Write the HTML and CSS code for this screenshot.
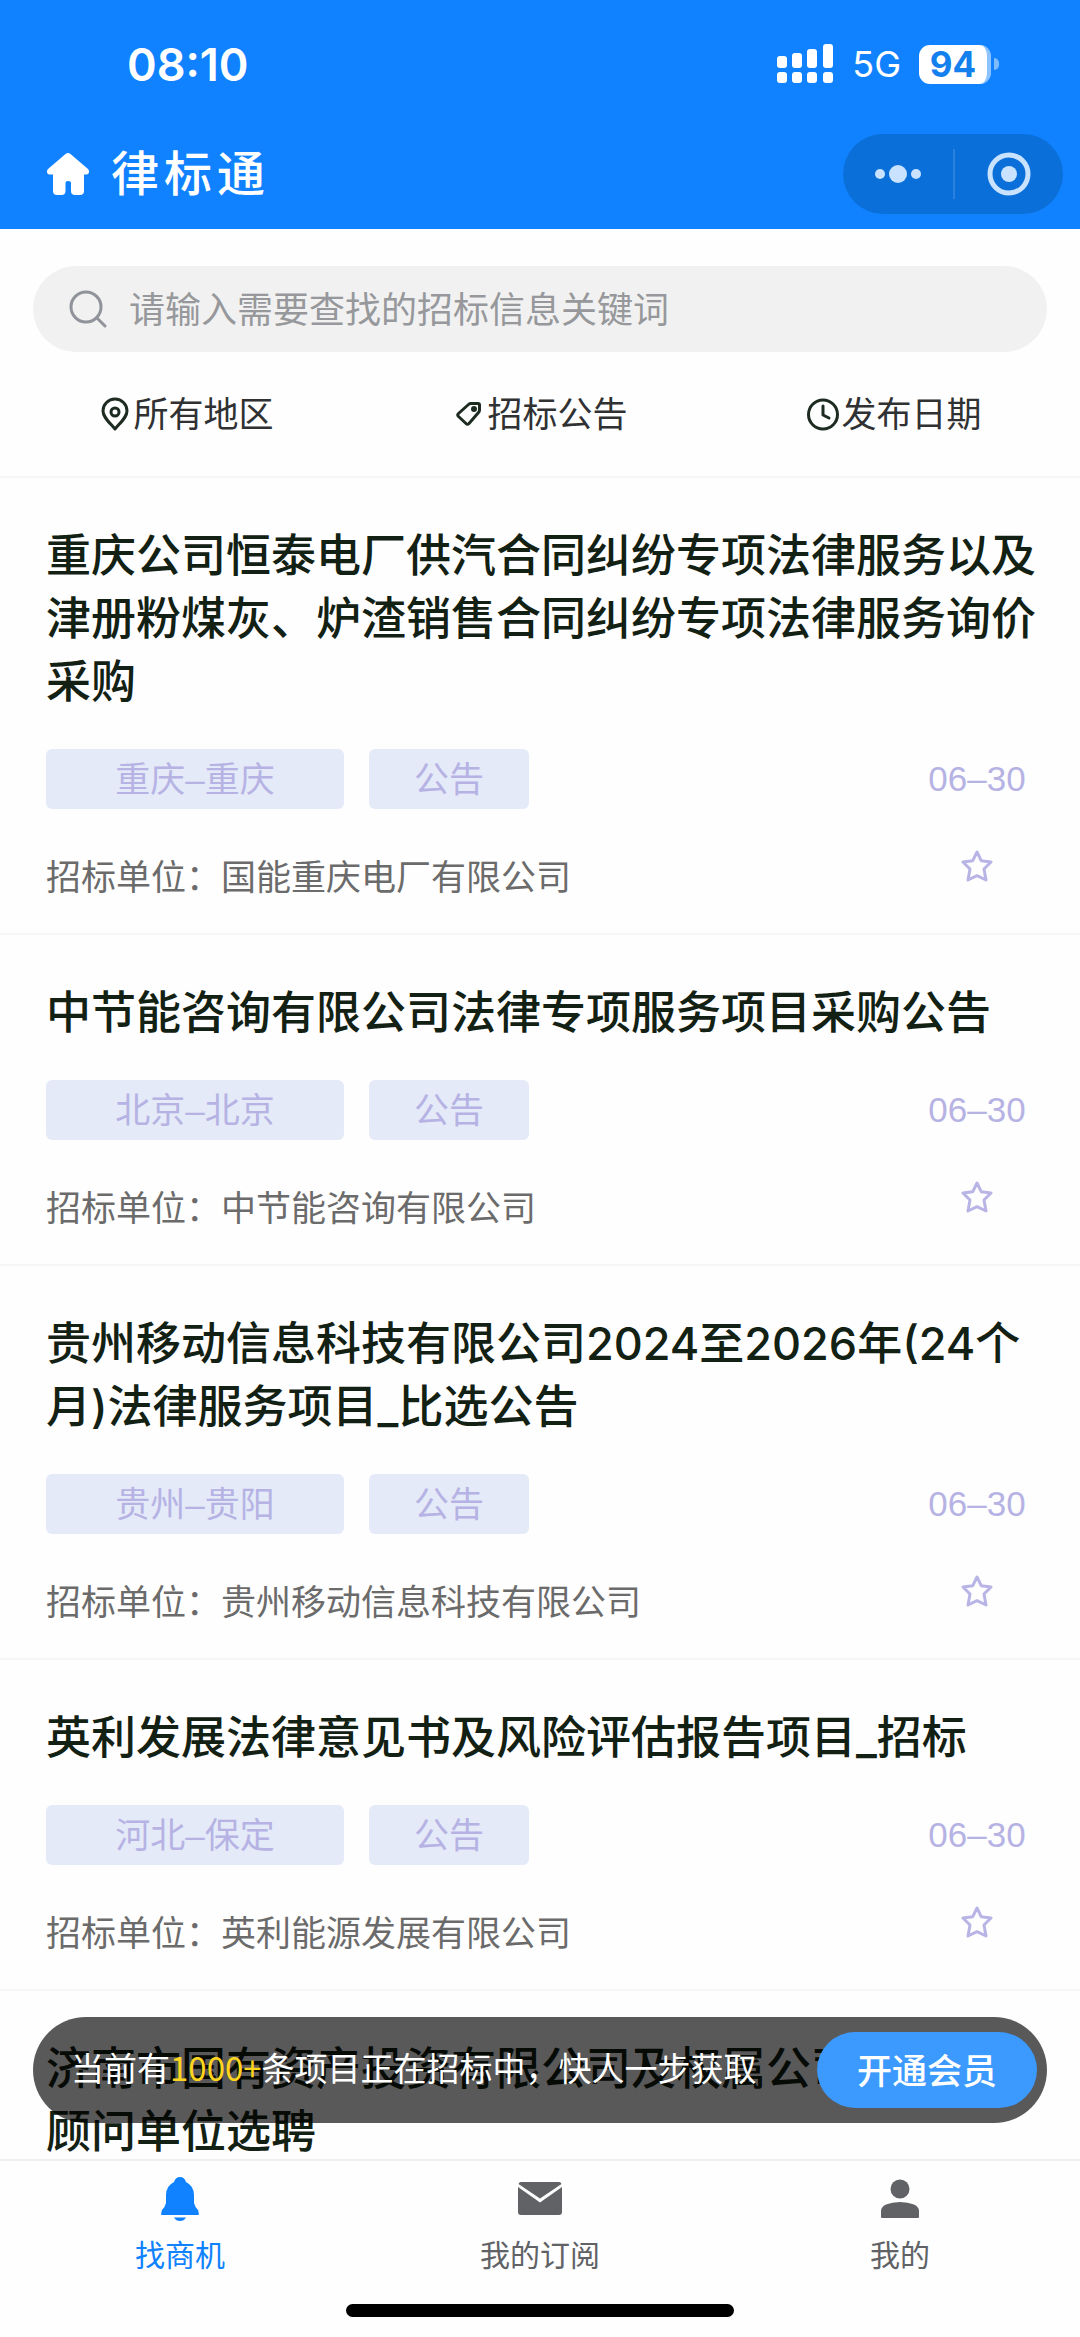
FILE: index.html
```html
<!DOCTYPE html>
<html lang="zh-CN">
<head>
<meta charset="utf-8">
<meta name="viewport" content="width=device-width, initial-scale=1">
<title>律标通</title>
<link rel="stylesheet" href="styles.css">
</head>
<body>
<div class="app">
  <header class="header">
    <div class="status">
      <span class="status-time">08:10</span>
      <div class="status-right">
        <svg class="signal" viewBox="0 0 56 40" aria-hidden="true">
          <rect x="0" y="12" width="10" height="12" rx="3"/><rect x="15" y="9" width="10" height="15" rx="3"/><rect x="30" y="5" width="10" height="19" rx="3"/><rect x="46" y="0" width="10" height="24" rx="3"/>
          <rect x="0" y="28" width="10" height="11" rx="3"/><rect x="15" y="28" width="10" height="11" rx="3"/><rect x="30" y="28" width="10" height="11" rx="3"/><rect x="46" y="28" width="10" height="11" rx="3"/>
        </svg>
        <span class="network">5G</span>
        <div class="battery"><span class="battery-level">94</span><span class="battery-nub"></span></div>
      </div>
    </div>
    <div class="navbar">
      <a class="home" href="#" aria-label="首页">
        <svg viewBox="0 0 42 42" aria-hidden="true"><path d="M18.500 1Q21-1 23.500 1L41 16Q42.500 18 41.800 20Q41 21.500 39 21.500H37V38Q37 42 33 42H28Q24 42 24 38V30Q24 28 21 28Q18.500 28 18.500 30V38Q18.500 42 14.500 42H10Q6 42 6 38V21.500H3Q1 21.500 .2 20Q-.5 18 1 16Z"/></svg>
      </a>
      <h1 class="brand">律标通</h1>
      <div class="capsule">
        <button class="capsule-btn" type="button" aria-label="更多">
          <svg viewBox="0 0 48 18" width="48" height="18" aria-hidden="true"><circle cx="6" cy="9" r="5"/><circle cx="24" cy="9" r="9"/><circle cx="42" cy="9" r="5"/></svg>
        </button>
        <button class="capsule-btn" type="button" aria-label="关闭">
          <svg viewBox="0 0 44 44" width="44" height="44" aria-hidden="true"><circle class="ring" cx="22" cy="22" r="19"/><circle cx="22" cy="22" r="8"/></svg>
        </button>
      </div>
    </div>
  </header>

  <div class="tools">
    <label class="search">
      <svg viewBox="0 0 38 38" aria-hidden="true"><circle cx="17" cy="17" r="15"/><path d="M28 28L36 36"/></svg>
      <input type="search" placeholder="请输入需要查找的招标信息关键词" aria-label="搜索">
    </label>
    <div class="filters">
      <button class="filter" type="button">
        <svg viewBox="0 0 35 35" aria-hidden="true"><path d="M17 32C11 25 5 20 5 14A12 12 0 0 1 29 14C29 20 23 25 17 32Z"/><circle cx="17" cy="15" r="4"/></svg>
        <span>所有地区</span>
      </button>
      <button class="filter" type="button">
        <svg viewBox="0 0 35 35" aria-hidden="true"><path d="M16.500 7.500Q17.500 6.500 19 6.500H26Q27.500 6.500 27.500 8V13Q27.500 14.500 26.500 15.500L17 26.500Q15.500 28 14 26.500L6.500 19.500Q5 18 6.500 16.500Z"/><circle cx="22" cy="12" r="1.500"/></svg>
        <span>招标公告</span>
      </button>
      <button class="filter" type="button">
        <svg viewBox="0 0 35 35" aria-hidden="true"><circle cx="17" cy="17.500" r="14.500"/><path d="M17 9V18L23 21"/></svg>
        <span>发布日期</span>
      </button>
    </div>
  </div>

  <main class="list">
    <article class="item">
      <h2 class="item-title">重庆公司恒泰电厂供汽合同纠纷专项法律服务以及津册粉煤灰、炉渣销售合同纠纷专项法律服务询价采购</h2>
      <div class="item-meta"><span class="tag tag-area">重庆–重庆</span><span class="tag tag-kind">公告</span><time class="side">06–30</time></div>
      <div class="item-foot"><p class="unit">招标单位：国能重庆电厂有限公司</p><button class="side star" type="button" aria-label="收藏"><svg viewBox="0 0 32 32" aria-hidden="true"><path d="M16 2L20.200 10.700L30 12L23 19L25 30L16 25.700L7 30L9 19L2 12L11.800 10.700Z"/></svg></button></div>
    </article>
    <article class="item">
      <h2 class="item-title">中节能咨询有限公司法律专项服务项目采购公告</h2>
      <div class="item-meta"><span class="tag tag-area">北京–北京</span><span class="tag tag-kind">公告</span><time class="side">06–30</time></div>
      <div class="item-foot"><p class="unit">招标单位：中节能咨询有限公司</p><button class="side star" type="button" aria-label="收藏"><svg viewBox="0 0 32 32" aria-hidden="true"><path d="M16 2L20.200 10.700L30 12L23 19L25 30L16 25.700L7 30L9 19L2 12L11.800 10.700Z"/></svg></button></div>
    </article>
    <article class="item">
      <h2 class="item-title">贵州移动信息科技有限公司2024至2026年(24个月)法律服务项目_比选公告</h2>
      <div class="item-meta"><span class="tag tag-area">贵州–贵阳</span><span class="tag tag-kind">公告</span><time class="side">06–30</time></div>
      <div class="item-foot"><p class="unit">招标单位：贵州移动信息科技有限公司</p><button class="side star" type="button" aria-label="收藏"><svg viewBox="0 0 32 32" aria-hidden="true"><path d="M16 2L20.200 10.700L30 12L23 19L25 30L16 25.700L7 30L9 19L2 12L11.800 10.700Z"/></svg></button></div>
    </article>
    <article class="item">
      <h2 class="item-title">英利发展法律意见书及风险评估报告项目_招标</h2>
      <div class="item-meta"><span class="tag tag-area">河北–保定</span><span class="tag tag-kind">公告</span><time class="side">06–30</time></div>
      <div class="item-foot"><p class="unit">招标单位：英利能源发展有限公司</p><button class="side star" type="button" aria-label="收藏"><svg viewBox="0 0 32 32" aria-hidden="true"><path d="M16 2L20.200 10.700L30 12L23 19L25 30L16 25.700L7 30L9 19L2 12L11.800 10.700Z"/></svg></button></div>
    </article>
    <article class="item">
      <h2 class="item-title">济南市国有资产投资有限公司及权属公司常年法律顾问单位选聘</h2>
    </article>
  </main>

  <footer class="footer">
    <div class="promo">
      <p class="promo-text">当前有<span class="promo-count">1000+</span>条项目正在招标中，快人一步获取</p>
      <button class="promo-btn" type="button">开通会员</button>
    </div>
    <nav class="tabbar">
      <a class="tab tab-active" href="#">
        <svg viewBox="0 0 44 44" aria-hidden="true"><path d="M22 0Q26.500 0 28 5Q36 9 36 18V26Q37 30 40 33Q41 35 40.800 38H3.200Q3 35 4 33Q7 30 8 26V18Q8 9 16 5Q17.500 0 22 0ZM16 40.500H28Q26 44 22 44Q18 44 16 40.500Z"/></svg>
        <span>找商机</span>
      </a>
      <a class="tab" href="#">
        <svg viewBox="0 0 44 44" aria-hidden="true"><path d="M3 5H41Q43 5 43.500 7L22 21.500L.5 7Q1 5 3 5ZM0 10L22 25.500L44 10V35Q44 38 41 38H3Q0 38 0 35Z"/></svg>
        <span>我的订阅</span>
      </a>
      <a class="tab" href="#">
        <svg viewBox="0 0 44 44" aria-hidden="true"><circle cx="22" cy="12" r="9.500"/><path d="M3 40V34Q3 30 8 27.500Q14 25 22 25Q30 25 36 27.500Q41 30 41 34V40Q41 41 40 41H4Q3 41 3 40Z"/></svg>
        <span>我的</span>
      </a>
    </nav>
    <div class="home-indicator"></div>
  </footer>
</div>
</body>
</html>
```
FILE: styles.css
```css
* { box-sizing: border-box; }

body {
  margin: 0;
  background: #fefefe;
  color: #303133;
  font-family: "Noto Sans CJK SC", sans-serif;
}

h1, h2, p { margin: 0; }

button, input {
  margin: 0;
  padding: 0;
  border: 0;
  background: none;
  color: inherit;
  font: inherit;
}

a { color: inherit; text-decoration: none; }
svg { display: block; flex: none; }

.app {
  display: flex;
  flex-direction: column;
  height: 100vh;
  overflow: hidden;
}

/* header */
.header {
  flex: none;
  padding: 36px 17px 15px 46px;
  background: #1082ff;
  color: #fff;
}

.status {
  display: flex;
  align-items: center;
  justify-content: space-between;
  height: 56px;
  padding: 0 64px 0 81px;
  font-family: Inter, sans-serif;
}

.status-time { font-size: 45px; font-weight: 600; }
.status-right { display: flex; align-items: center; }
.signal { width: 56px; height: 40px; fill: #fff; }
.network { margin: 0 18px 0 19px; font-size: 36px; }

.battery { display: flex; align-items: center; gap: 3px; }

.battery-level {
  width: 72px;
  height: 39px;
  border-right: 4px solid #8cc3ff;
  border-radius: 11px;
  background: #fff;
  color: #1480ee;
  font-size: 35px;
  font-weight: 700;
  line-height: 38px;
  text-align: center;
}

.battery-nub {
  width: 5px;
  height: 12px;
  border-radius: 0 5px 5px 0;
  background: #7ebcff;
}

.navbar {
  display: flex;
  align-items: center;
  margin-top: 42px;
}

.home svg { width: 44px; height: 42px; fill: #fff; }

.brand {
  margin-left: 21px;
  padding-bottom: 8px;
  font-size: 48px;
  font-weight: 500;
  line-height: 64px;
  letter-spacing: 5px;
}

.capsule {
  display: flex;
  width: 220px;
  height: 80px;
  margin-left: auto;
  border-radius: 40px;
  background: #0b6fd9;
}

.capsule-btn {
  display: flex;
  flex: 1;
  align-items: center;
  justify-content: center;
  fill: #c8e2ff;
}

.capsule-btn + .capsule-btn::before {
  content: "";
  width: 2px;
  height: 50px;
  margin-right: 32px;
  background: #2a80dd;
}

.capsule-btn + .capsule-btn { justify-content: flex-start; }
.ring { fill: none; stroke: #c8e2ff; stroke-width: 5; }

/* search and filters */
.tools {
  flex: none;
  padding: 37px 33px 0;
  border-bottom: 2px solid #f6f6f6;
}

.search {
  display: flex;
  align-items: center;
  height: 86px;
  padding: 0 36px;
  border-radius: 43px;
  background: #f1f1f1;
}

.search svg {
  width: 38px;
  height: 38px;
  fill: none;
  stroke: #909399;
  stroke-width: 3;
  stroke-linecap: round;
}

.search input {
  flex: 1;
  min-width: 0;
  margin-left: 22px;
  padding-bottom: 4px;
  outline: none;
  font-size: 36px;
  line-height: 50px;
}

.search input::placeholder { color: #96989b; opacity: 1; }

.filters {
  display: flex;
  margin: 0 -24px;
  padding: 34px 0;
}

.filter {
  display: flex;
  flex: 1;
  align-items: center;
  justify-content: center;
  font-size: 35px;
  line-height: 52px;
}

.filter span { padding-bottom: 4px; }

.filter svg {
  width: 35px;
  height: 35px;
  fill: none;
  stroke: #1d2b20;
  stroke-width: 3;
  stroke-linejoin: round;
  stroke-linecap: round;
}

/* list of notices */
.list {
  flex: 1;
  min-height: 0;
  overflow: hidden;
}

.item {
  padding: 46px 43px 33px 46px;
  border-bottom: 2px solid #f6f6f6;
}

.item-title {
  color: #122113;
  font-family: Inter, "Noto Sans CJK SC", sans-serif;
  font-size: 45px;
  font-weight: 500;
  line-height: 63px;
}

.item-meta {
  display: flex;
  align-items: center;
  gap: 25px;
  margin-top: 36px;
  color: #b6b3e4;
  font-size: 35px;
}

.tag {
  height: 60px;
  border-radius: 6px;
  background: #e4eaf8;
  font-family: "Liberation Sans", "Noto Sans CJK SC", sans-serif;
  line-height: 62px;
  text-align: center;
}

.tag-area { width: 298px; }
.tag-kind { width: 160px; }

.side {
  width: 120px;
  margin-left: auto;
  font-family: "Liberation Sans", sans-serif;
  text-align: center;
}

.item-foot {
  display: flex;
  align-items: flex-start;
  margin-top: 41px;
}

.unit { color: #6b6b6b; font-size: 35px; line-height: 50px; }

.star { display: flex; justify-content: center; }

.star svg {
  width: 32px;
  height: 32px;
  fill: none;
  stroke: #b9b4e6;
  stroke-width: 3;
  stroke-linejoin: round;
}

/* footer */
.footer {
  position: relative;
  flex: none;
  border-top: 2px solid #eceff0;
  background: #fefefe;
}

.promo {
  position: absolute;
  right: 33px;
  bottom: 100%;
  left: 33px;
  display: flex;
  align-items: center;
  justify-content: space-between;
  height: 106px;
  margin-bottom: 38px;
  padding: 0 10px 0 38px;
  border-radius: 53px;
  background: rgba(0, 0, 0, 0.65);
  color: #fff;
}

.promo-text {
  padding-bottom: 6px;
  font-size: 33px;
  line-height: 48px;
  white-space: nowrap;
}

.promo-count { color: #ffd51e; }

.promo-btn {
  width: 220px;
  height: 76px;
  padding-bottom: 4px;
  border-radius: 38px;
  background: #3c9aff;
  font-size: 35px;
  font-weight: 500;
}

.tabbar { display: flex; padding-top: 16px; }

.tab {
  display: flex;
  flex: 1;
  flex-direction: column;
  align-items: center;
  gap: 10px;
  color: #606266;
  font-size: 30px;
  line-height: 44px;
}

.tab svg { width: 44px; height: 44px; fill: currentColor; }
.tab-active { color: #1082ff; }

.home-indicator {
  width: 36%;
  height: 13px;
  margin: 29px auto 20px;
  border-radius: 7px;
  background: #000;
}
```
